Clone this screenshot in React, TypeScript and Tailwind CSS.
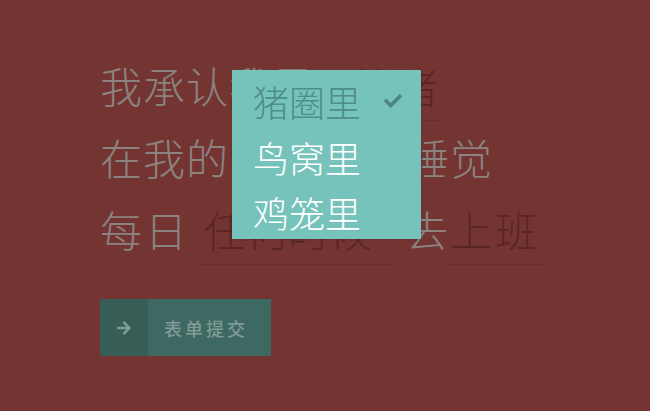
import React from "react";
import { FaCheck, FaArrowRight } from "react-icons/fa";

const font = { fontFamily: '"Noto Sans CJK SC", "Noto Sans", sans-serif' };

function Field({ value, className }: { value: string; className: string }) {
  return (
    <span
      className={`inline-flex h-full items-center border-b border-dotted border-[#5c2a28] text-[#5a2624] ${className}`}
    >
      {value}
    </span>
  );
}

export default function App() {
  return (
    <div className="relative h-[411px] w-[650px] overflow-hidden bg-[#743532]" style={font}>
      <div className="pl-[100px] pt-[49px] text-[42px] font-light leading-none text-[#8a8380]">
        <div className="flex h-[72px] items-center">
          <span className="tracking-[1px]">我承认我是</span>
          <Field value="笨猪" className="ml-[38px] w-[86px] pt-[2px]" />
        </div>
        <div className="flex h-[72px] items-center">
          <span className="tracking-[1px]">在我的</span>
          <Field value="猪圈里" className="ml-[4px] w-[174px] pl-[4px]" />
          <span className="tracking-[1px]">睡觉</span>
        </div>
        <div className="flex h-[72px] items-center">
          <span className="tracking-[3px]">每日</span>
          <Field value="任何时候" className="ml-[12px] w-[192px] pl-[2px]" />
          <span className="ml-[12px]">去</span>
          <Field value="上班" className="ml-[0px] w-[95px] pl-[2px] tracking-[3px]" />
        </div>

        <button className="mt-[34px] flex h-[57px] w-[171px] items-stretch bg-[#3e6862] text-[#7f9c96]">
          <span className="flex w-[48px] items-center justify-center bg-[#375d57]">
            <FaArrowRight size={16} />
          </span>
          <span className="flex flex-1 items-center pl-[16px] text-[18px] font-medium tracking-[3px]">
            表单提交
          </span>
        </button>
      </div>

      <div className="absolute left-[232px] top-[70px] flex h-[169px] w-[189px] flex-col bg-[#76c3bb] pl-[21px] pt-[3px] text-[36px] font-light leading-none shadow-[0_1px_2px_rgba(0,0,0,0.15)]">
        <div className="flex h-[56px] items-center text-[#4e8e87]">
          <span>猪圈里</span>
          <FaCheck className="ml-[23px] text-[#4a8680]" size={18} />
        </div>
        <div className="flex h-[56px] items-center text-white">鸟窝里</div>
        <div className="flex h-[54px] items-center text-white">鸡笼里</div>
      </div>
    </div>
  );
}
